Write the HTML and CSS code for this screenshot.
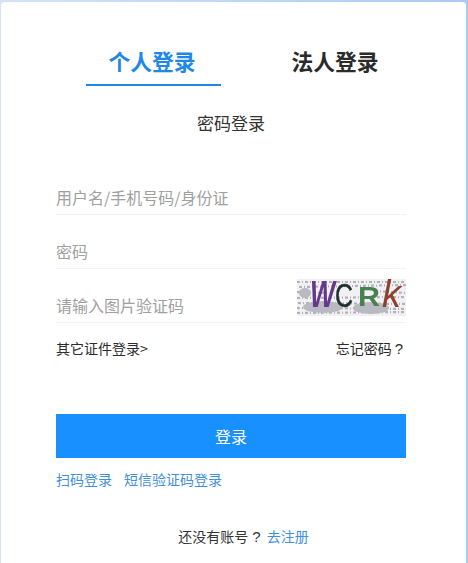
FILE: index.html
```html
<!DOCTYPE html>
<html lang="zh">
<head>
<meta charset="utf-8">
<title>登录</title>
<link rel="stylesheet" href="styles.css">
</head>
<body>
<main class="card">
  <nav class="tabs">
    <a class="tab tab-active"><span class="tab-label">个人登录</span></a>
    <a class="tab"><span class="tab-label">法人登录</span></a>
  </nav>
  <h2 class="subtitle">密码登录</h2>
  <form class="form">
    <div class="field"><span class="placeholder">用户名/手机号码/身份证</span></div>
    <div class="field"><span class="placeholder">密码</span></div>
    <div class="field field-captcha">
      <span class="placeholder">请输入图片验证码</span>
      <svg class="captcha" viewBox="0 0 109 37" width="109" height="37" role="img">
        <rect width="109" height="37" fill="#f1f1f3"/>
        <g fill="none" stroke="#b2b2b9" stroke-width="2.2" stroke-dasharray="3 2 1 2">
          <path d="M0 3 H109"/>
          <path d="M2 8 L109 6"/>
          <path d="M0 13 L32 14 M78 12 L109 14"/>
          <path d="M0 19 L109 18"/>
          <path d="M1 24 L109 25"/>
          <path d="M0 29 L109 30"/>
          <path d="M0 34 L109 33"/>
        </g>
        <g fill="#b9b9c1">
          <ellipse cx="26" cy="28" rx="20" ry="6"/>
          <ellipse cx="74" cy="29" rx="18" ry="6"/>
          <ellipse cx="8" cy="14" rx="6" ry="5"/>
        </g>
        <text class="cap cap-w" x="13" y="28" textLength="25" lengthAdjust="spacingAndGlyphs">W</text>
        <text class="cap cap-c" x="38" y="28" textLength="18" lengthAdjust="spacingAndGlyphs">C</text>
        <text class="cap cap-r" x="61" y="27" textLength="22" lengthAdjust="spacingAndGlyphs">R</text>
        <text class="cap cap-k" x="85" y="28" textLength="19" lengthAdjust="spacingAndGlyphs">k</text>
      </svg>
    </div>
    <div class="row-between">
      <a class="link-dark">其它证件登录&gt;</a>
      <a class="link-dark">忘记密码<span class="mark">?</span></a>
    </div>
    <button type="button" class="submit">登录</button>
    <div class="alt-links">
      <a class="link-blue">扫码登录</a>
      <a class="link-blue">短信验证码登录</a>
    </div>
    <p class="register">还没有账号<span class="mark mark-gap">?</span><a class="link-blue">去注册</a></p>
  </form>
</main>
</body>
</html>
```
FILE: styles.css
```css
html, body {
  margin: 0;
  height: 100%;
}
body {
  background: linear-gradient(90deg, #d5e2f6, #a9cbf6);
  font-family: "Noto Sans CJK SC", "Liberation Sans", sans-serif;
  overflow: hidden;
}
.card {
  box-sizing: border-box;
  width: 465px;
  height: 561px;
  margin: 2px 0 0 1px;
  background: #fff;
  border-radius: 4px 4px 0 0;
  padding: 0 60px 0 55px;
}
.tabs {
  display: flex;
  gap: 48px;
  padding: 40px 0 0 30px;
  margin-right: -15px;
}
.tab {
  width: 135px;
  height: 44px;
  box-sizing: border-box;
  text-align: center;
  font-size: 21.8px;
  font-weight: 700;
  line-height: 38px;
  color: #2b2b2b;
}
.tab-label {
  display: block;
  margin-right: 3px;
}
.tab-active {
  color: #1e88e8;
  border-bottom: 2px solid #1e88e8;
}
.subtitle {
  margin: 24px 0 0;
  text-align: center;
  font-size: 17px;
  line-height: 26px;
  font-weight: 400;
  color: #333;
}
.form {
  margin-top: 25px;
}
.field {
  display: flex;
  justify-content: space-between;
  align-items: center;
  height: 54px;
  box-sizing: border-box;
  border-bottom: 1px solid #f2f2f2;
  padding-top: 18px;
}
.placeholder {
  font-size: 16px;
  line-height: 24px;
  color: #a0a0a0;
}
.captcha {
  display: block;
  margin-top: -14px;
  overflow: visible;
  filter: blur(0.6px);
}
.cap {
  font-family: "Liberation Sans", sans-serif;
  font-style: italic;
}
.cap-w { fill: #64398a; font-weight: 700; font-size: 36px; }
.cap-c { fill: #1f2f2a; font-size: 33px; font-style: normal; stroke: #1f2f2a; stroke-width: 0.5px; }
.cap-r { fill: #4a7f4e; font-size: 28px; font-weight: 700; font-style: normal; }
.cap-k { fill: #8d4230; font-size: 38px; }
.row-between {
  display: flex;
  justify-content: space-between;
  margin-top: 15px;
  font-size: 14px;
  line-height: 20px;
}
.link-dark {
  color: #2b2b2b;
}
.mark {
  display: inline-block;
  font-family: "Liberation Sans", sans-serif;
  font-size: 15px;
  margin: 0 3px 0 3px;
}
.mark-gap {
  margin: 0 6px 0 4px;
}
.submit {
  display: block;
  width: 100%;
  height: 44px;
  margin-top: 55px;
  border: 0;
  padding: 0;
  background: #1890ff;
  color: #fff;
  font: inherit;
  font-size: 16px;
}
.alt-links {
  display: flex;
  gap: 12px;
  margin-top: 11px;
  font-size: 14px;
  line-height: 20px;
}
.link-blue {
  color: #3f8fe0;
}
.register {
  margin: 37px 0 0;
  text-align: center;
  font-size: 14px;
  line-height: 20px;
  color: #333;
  padding-left: 25px;
}
```
